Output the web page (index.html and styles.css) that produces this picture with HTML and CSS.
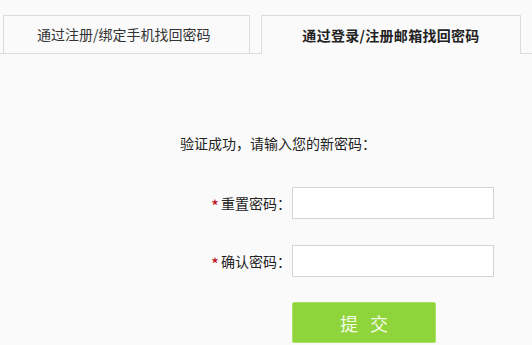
FILE: index.html
```html
<!DOCTYPE html>
<html lang="zh-CN">
<head>
<meta charset="utf-8">
<title>找回密码</title>
<link rel="stylesheet" href="styles.css">
</head>
<body>
<div class="tabs">
  <div class="tab tab-phone">通过注册/绑定手机找回密码</div>
  <div class="tab tab-mail active">通过登录/注册邮箱找回密码</div>
  <div class="tab-rest"></div>
</div>
<div class="panel">
  <p class="msg">验证成功，请输入您的新密码：</p>
  <div class="row">
    <label class="label"><span class="star">*</span>重置密码：</label>
    <input class="field" type="password">
  </div>
  <div class="row">
    <label class="label"><span class="star">*</span>确认密码：</label>
    <input class="field" type="password">
  </div>
  <div class="row btn-row">
    <button class="submit" type="button">提&nbsp;&nbsp;&nbsp;交</button>
  </div>
</div>
</body>
</html>
```
FILE: styles.css
```css
html, body {
  margin: 0;
  padding: 0;
  background: #fafafa;
  font-family: "Noto Sans CJK SC", "Liberation Sans", sans-serif;
  font-size: 14px;
  color: #222;
}
.tabs {
  display: flex;
  padding-top: 15px;
  height: 54px;
  box-sizing: border-box;
}
.tab {
  height: 39px;
  box-sizing: border-box;
  border: 1px solid #dcdcdc;
  background: #fafafa;
  display: flex;
  align-items: center;
  justify-content: center;
  font-size: 14px;
  color: #333;
}
.tab-phone {
  width: 261px;
  border-left: none;
  border-top: none;
  border-right: none;
  position: relative;
  background: transparent;
  justify-content: flex-start;
  padding-left: 37px;
  z-index: 0;
}
.tab-phone::before {
  content: "";
  position: absolute;
  left: 3px;
  top: 0;
  width: 247px;
  height: 38px;
  box-sizing: border-box;
  border: 1px solid #dcdcdc;
  border-bottom: none;
  background: #fafafa;
  z-index: -1;
}
.tab-mail {
  width: 260px;
  border-bottom: none;
  font-weight: bold;
  color: #222;
  letter-spacing: 0.3px;
}
.tab-rest {
  flex: 1;
  border-bottom: 1px solid #dcdcdc;
}
.panel {
  padding-top: 79px;
}
.msg {
  margin: 0;
  padding-left: 180px;
  line-height: 20px;
  color: #222;
}
.row {
  display: flex;
  align-items: center;
  margin-top: 26px;
}
.msg + .row { margin-top: 34px; }
.label {
  width: 292px;
  box-sizing: border-box;
  text-align: right;
  padding-right: 1px;
  color: #222;
}
.star {
  color: #c0101a;
  font-size: 17px;
  vertical-align: -4px;
  line-height: 14px;
  margin-right: 2px;
}
.field {
  width: 202px;
  height: 32px;
  box-sizing: border-box;
  border: 1px solid #d4d4d4;
  background: #fff;
  margin: 0;
  padding: 0 6px;
}
.btn-row {
  margin-top: 25px;
  padding-left: 292px;
}
.submit {
  width: 144px;
  height: 41px;
  border: 1px solid #a8e062;
  border-radius: 2px;
  background: #8ed43a;
  color: #f4fbe8;
  font-family: "Noto Sans CJK SC", sans-serif;
  font-size: 18px;
  padding: 0;
}
```
